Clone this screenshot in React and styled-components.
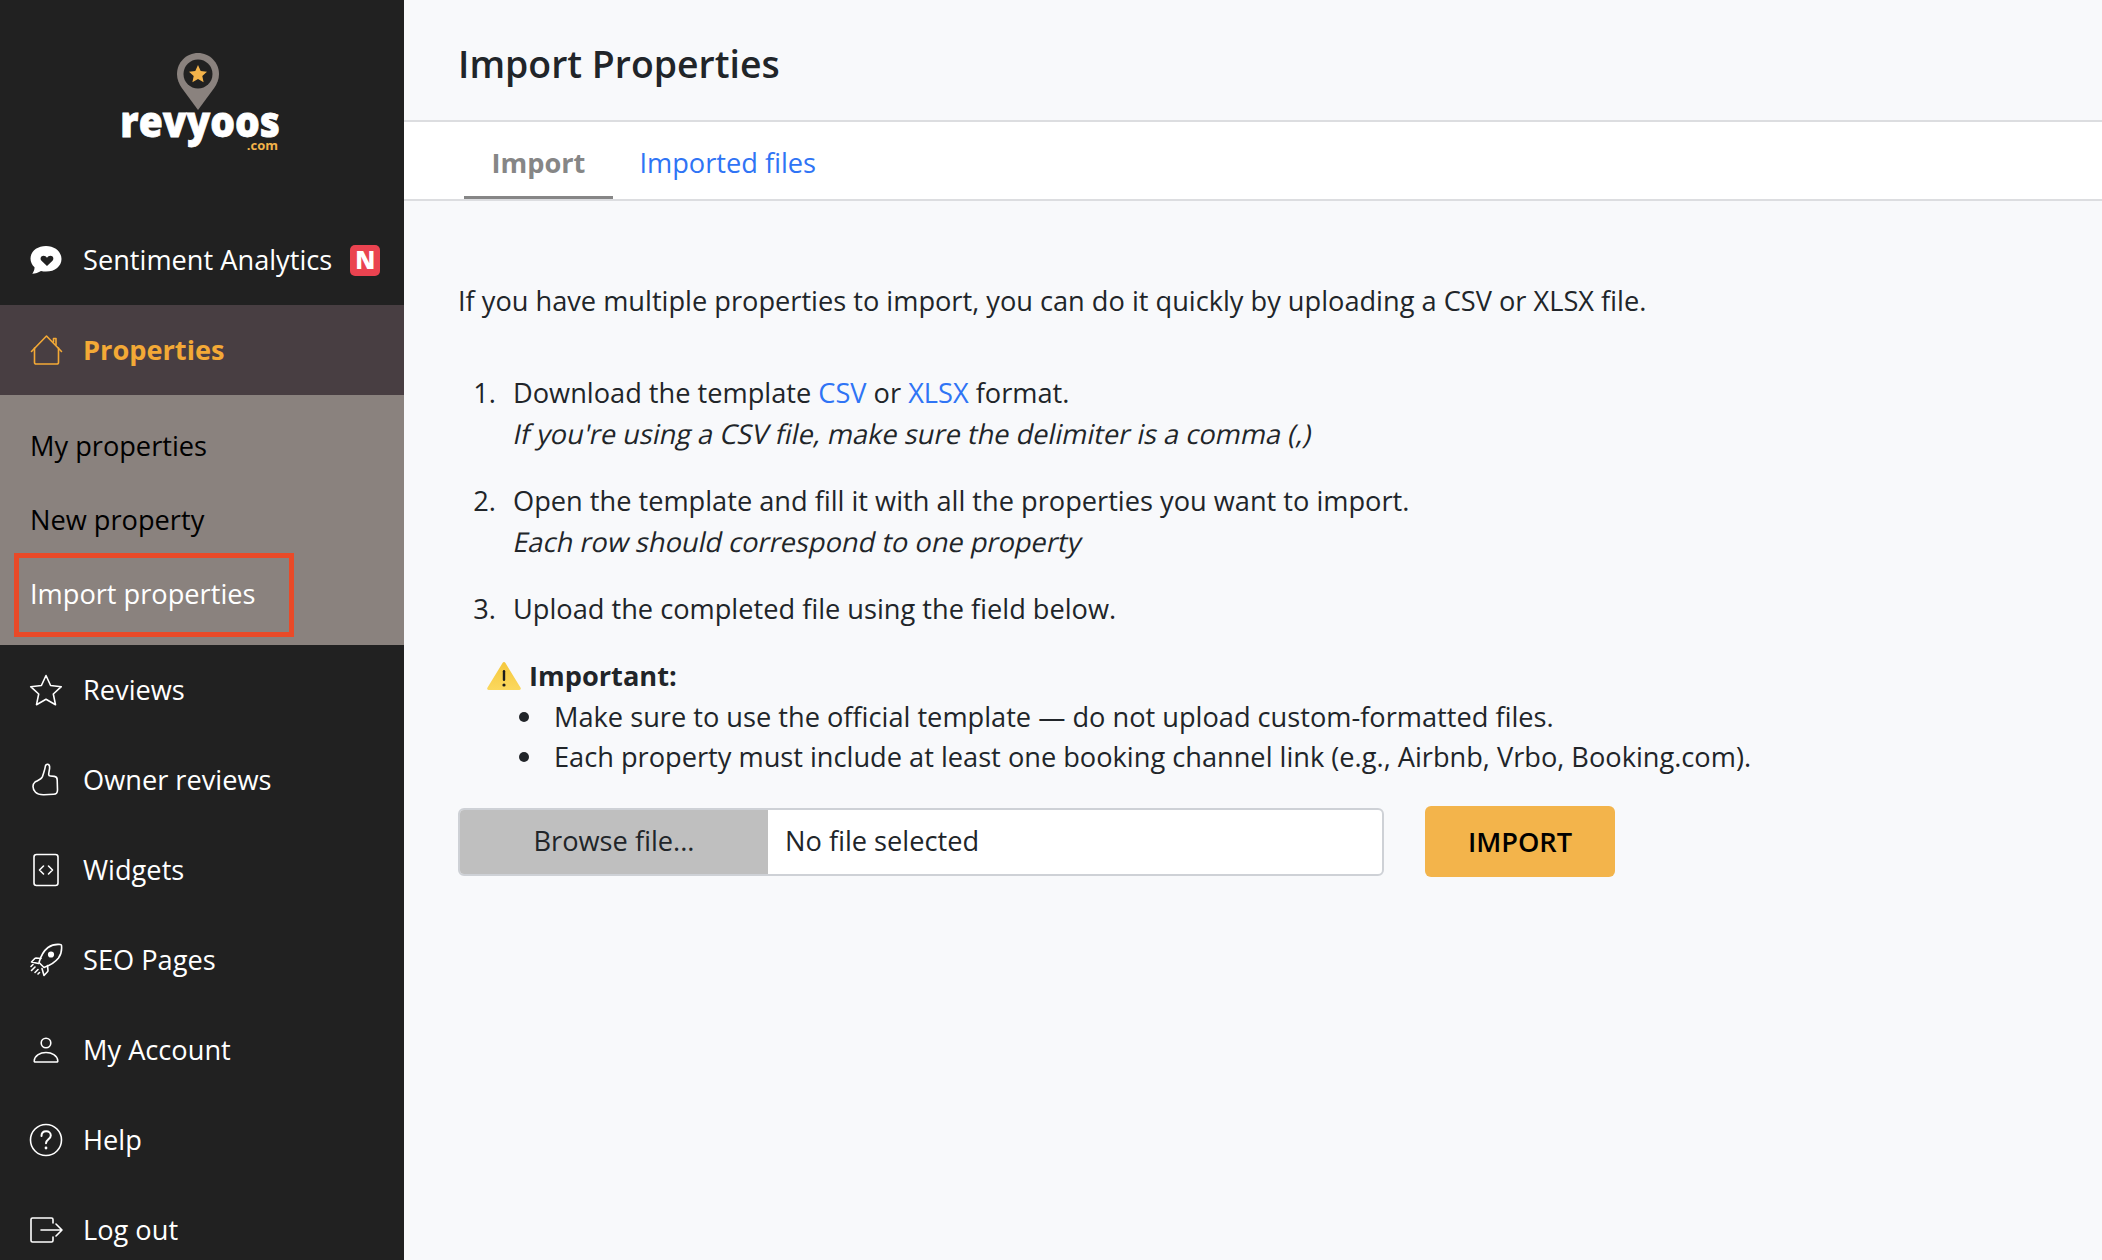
import React from 'react';
import styled, { createGlobalStyle } from 'styled-components';

const GlobalStyle = createGlobalStyle`
  html, body {
    margin: 0;
    padding: 0;
    background: #f8f9fb;
  }
  body {
    font-family: "Open Sans", "Noto Sans", sans-serif;
    font-size: 27.2px;
    line-height: 40.5px;
    color: #212529;
    overflow: hidden;
  }
  * {
    box-sizing: border-box;
  }
`;

const Page = styled.div`
  display: flex;
  width: 2102px;
  height: 1260px;
  overflow: hidden;
`;

const Sidebar = styled.nav`
  flex: 0 0 404px;
  height: 1260px;
  background: #212121;
  overflow: hidden;
`;

const LogoBlock = styled.div`
  height: 215px;
  display: flex;
  flex-direction: column;
  align-items: center;
  padding: 53px 8px 0 0;
`;

/* the logo lettering is narrower than any installed face */
const LogoWord = styled.div`
  margin: -7.5px 0 0 4px;
  font-size: 43px;
  font-weight: 800;
  line-height: 34px;
  color: #fff;
  -webkit-text-stroke: 0.8px #fff;
  transform: scaleX(0.905);
`;

const LogoCom = styled.div`
  align-self: flex-end;
  margin: 2.5px 118px 0 0;
  font-size: 13px;
  font-weight: 700;
  line-height: 10px;
  color: #f3b34a;
`;

const MenuRow = styled.a`
  display: flex;
  align-items: center;
  height: 90px;
  padding-left: 29px;
  color: ${(p) => (p.$active ? '#f3a936' : '#fff')};
  font-weight: ${(p) => (p.$active ? 700 : 400)};
  background: ${(p) => (p.$active ? '#483e42' : 'transparent')};
`;

const MenuIcon = styled.svg`
  flex: 0 0 34px;
  width: 34px;
  height: 34px;
  margin-right: 20px;
  fill: none;
  stroke: currentColor;
  stroke-width: 1.6;
  stroke-linecap: round;
  stroke-linejoin: round;
`;

const NewBadge = styled.span`
  display: flex;
  align-items: center;
  justify-content: center;
  width: 30px;
  height: 31px;
  margin-left: 18px;
  border-radius: 5px;
  background: #ea4350;
  color: #fff;
  font-size: 24px;
  font-weight: 800;
`;

const SubMenu = styled.div`
  height: 250px;
  padding-top: 14px;
  background: #8a827e;
`;

const SubItem = styled.a`
  position: relative;
  display: flex;
  align-items: center;
  height: 74px;
  padding-left: 30px;
  color: ${(p) => (p.$current ? '#fff' : '#000')};
`;

const Annotation = styled.span`
  position: absolute;
  left: 14px;
  top: -4px;
  width: 280px;
  height: 84px;
  border: 5px solid #e94a28;
`;

const Main = styled.main`
  flex: 1;
  min-width: 0;
`;

const TitleBar = styled.header`
  height: 122px;
  padding: 38px 0 0 54px;
  border-bottom: 2px solid #dcdde0;
`;

const Title = styled.h1`
  margin: 0;
  font-size: 37.4px;
  font-weight: 600;
  line-height: 52px;
  color: #212529;
`;

const Tabs = styled.div`
  display: flex;
  height: 79px;
  padding-left: 60px;
  background: #fff;
  border-bottom: 2px solid #dcdde0;
`;

const Tab = styled.a`
  height: 77px;
  padding: 21px 27.5px 0;
  font-weight: ${(p) => (p.$active ? 700 : 400)};
  color: ${(p) => (p.$active ? '#868686' : '#2f74f5')};
  border-bottom: ${(p) => (p.$active ? '3px solid #868686' : 'none')};
  &:not(:first-child) {
    padding-left: 26.5px;
  }
`;

const Content = styled.section`
  padding: 80px 54px 0;
`;

const Intro = styled.p`
  margin: 0 0 50px;
`;

const Steps = styled.ol`
  margin: 0;
  padding-left: 55px;
  list-style: none;
  counter-reset: step;
`;

const Step = styled.li`
  position: relative;
  margin-bottom: 26px;
  line-height: 41px;
  counter-increment: step;
  &::before {
    content: counter(step) ".";
    position: absolute;
    right: 100%;
    margin-right: 17px;
  }
  &:last-child {
    margin-bottom: 27.5px;
  }
`;

const Link = styled.a`
  color: #2f74f5;
`;

/* the reference slants the upright face, so it keeps the upright widths */
const Note = styled.span`
  display: block;
  margin-left: -1px;
  transform: skewX(-12deg);
  transform-origin: 0 75%;
`;

const ImportantBlock = styled.div`
  padding-left: 29px;
`;

const ImportantHead = styled.div`
  display: flex;
  align-items: center;
  font-weight: 700;
`;

const WarnIcon = styled.svg`
  width: 34px;
  height: 30px;
  margin-right: 8px;
`;

const Rules = styled.ul`
  margin: 0;
  padding-left: 67px;
  list-style: none;
`;

const Rule = styled.li`
  position: relative;
  &::before {
    content: "";
    position: absolute;
    left: -35px;
    top: 15px;
    width: 10px;
    height: 10px;
    border-radius: 50%;
    background: #212529;
  }
`;

const Actions = styled.div`
  display: flex;
  align-items: flex-start;
  gap: 41px;
  margin-top: 28px;
`;

const FileField = styled.div`
  display: flex;
  width: 926px;
  height: 68px;
  margin-top: 2px;
  border: 2px solid #ced1d6;
  border-radius: 6px;
  background: #fff;
  overflow: hidden;
`;

const BrowseButton = styled.span`
  flex: 0 0 308px;
  display: flex;
  align-items: center;
  justify-content: center;
  background: #bfbfbf;
`;

const FileName = styled.span`
  display: flex;
  align-items: center;
  padding-left: 17px;
`;

const ImportButton = styled.button`
  width: 190px;
  height: 71px;
  padding: 0;
  border: none;
  border-radius: 6px;
  background: #f3b44b;
  color: #000;
  font-family: inherit;
  font-size: 27.2px;
  font-weight: 600;
`;

const SentimentIcon = () => (
  <MenuIcon viewBox="0 0 34 34">
    <path
      d="M17 3C8 3 1.500 8.500 1.500 15.500c0 3.500 1.500 6.500 4 8.700.2 2.400-.8 4.600-2.200 6.600 3-.2 6.200-1.200 8.700-2.800 1.600.4 3.300.6 5 .6 9 0 15.500-5.500 15.500-12.600S26 3 17 3z"
      fill="#fff"
      stroke="none"
    />
    <path
      d="M18 23l-5.500-5.300c-1.800-2-.7-5 2-5 1.500 0 2.700.8 3.500 2 .8-1.200 2-2 3.500-2 2.700 0 3.800 3 2 5z"
      fill="#212121"
      stroke="none"
    />
  </MenuIcon>
);

const HouseIcon = () => (
  <MenuIcon viewBox="0 0 34 34">
    <path d="M2.500 18.500L17.500 3l15 15.500" />
    <path d="M5.500 15v14.500a1.500 1.500 0 0 0 1.500 1.500h21a1.500 1.500 0 0 0 1.500-1.500V15" />
    <path d="M24.500 9V5.500H27V12" />
  </MenuIcon>
);

const StarIcon = () => (
  <MenuIcon viewBox="0 0 34 34">
    <path d="M17 2.500l4.600 10 10.700 1.200-8 7.300 2.200 10.700L17 26.300l-9.500 5.400L9.700 21l-8-7.300 10.700-1.200z" />
  </MenuIcon>
);

const ThumbIcon = () => (
  <MenuIcon viewBox="0 0 34 34">
    <path d="M13.500 13.500c1-3.500 2.500-7 2.700-9.500.1-1.800 1.200-3 2.600-2.700 1.700.4 2 2.200 1.800 4-.2 2-.9 4.500-.9 6.300.1 1 .7 1.300 1.600 1.400l4 .4c2 .3 2.900 1.500 2.900 3.500l.3 10c0 2.500-1.500 4.300-4 4.400l-9.500.4c-3 .1-6.500-.5-8.500-2.500-1.500-1.500-2.500-3.500-2.500-5.700 0-1.800.7-3.400 2-4.500 2.700-1.500 6-2 7.500-5.500z" />
  </MenuIcon>
);

const WidgetIcon = () => (
  <MenuIcon viewBox="0 0 34 34">
    <rect x="5" y="1.500" width="24" height="31" rx="2.500" />
    <path d="M14.500 13l-4 4 4 4M19.500 13l4 4-4 4" />
  </MenuIcon>
);

const RocketIcon = () => (
  <MenuIcon viewBox="0 0 34 34">
    <path d="M10 19.500l5 5c5.500-2 11-5 14.500-9.500 2.500-3.500 3.500-8 3-12.500-.1-.6-.5-1-1-1C27 1 22.500 2 19 4.500 14.500 8 11.500 14 10 19.500z" />
    <path d="M12 15.500l-5-.5c-.5 0-.9.2-1.200.5L2.500 19l7 1.500" />
    <path d="M18.500 22.500l.5 5c0 .5-.2.9-.5 1.200L15 32.500l-2-7" />
    <circle cx="22" cy="11.500" r="2.300" fill="currentColor" />
    <path d="M6 24l-3.500 3.500M9 26.500l-3 3M4 21.500l-2 2M10.500 29.500l-1.500 1.500" />
  </MenuIcon>
);

const AccountIcon = () => (
  <MenuIcon viewBox="0 0 34 34">
    <circle cx="17" cy="10" r="4.800" />
    <path d="M6.500 29c-1 0-1.500-.5-1.300-1.500C6 22.500 11 19.500 17 19.500s11 3 11.800 8c.2 1-.3 1.500-1.300 1.500z" />
  </MenuIcon>
);

const HelpIcon = () => (
  <MenuIcon viewBox="0 0 34 34">
    <circle cx="17" cy="17" r="15.500" />
    <path d="M12.500 13c0-3 2-4.700 4.700-4.700 2.600 0 4.600 1.700 4.600 4.100 0 3.700-4.800 4-4.800 7.800" strokeWidth="2" />
    <circle cx="17" cy="25" r="1.400" fill="currentColor" stroke="none" />
  </MenuIcon>
);

const LogoutIcon = () => (
  <MenuIcon viewBox="0 0 34 34">
    <path d="M24 10V6.500A1.500 1.500 0 0 0 22.500 5h-19A1.500 1.500 0 0 0 2 6.500v21A1.500 1.500 0 0 0 3.500 29h19a1.500 1.500 0 0 0 1.500-1.500V24" />
    <path d="M12 17h21M27 11l6 6-6 6" />
  </MenuIcon>
);

const LogoPin = () => (
  <svg width="42" height="58" viewBox="0 0 42 58">
    <path
      d="M21 0C9.400 0 0 9.400 0 21c0 5.500 2 9.800 5 14.200L21 57l16-21.800c3-4.400 5-8.700 5-14.200C42 9.400 32.600 0 21 0z"
      fill="#8a827e"
    />
    <circle cx="21" cy="21" r="14.500" fill="#212121" />
    <path
      d="M21 12l2.700 6 6.300.7-4.700 4.300 1.300 6.300L21 26.100l-5.600 3.200 1.300-6.300-4.700-4.300 6.300-.7z"
      fill="#f3b34a"
    />
  </svg>
);

const menuTop = [{ label: 'Sentiment Analytics', Icon: SentimentIcon, badge: true }];

const menuBottom = [
  { label: 'Reviews', Icon: StarIcon },
  { label: 'Owner reviews', Icon: ThumbIcon },
  { label: 'Widgets', Icon: WidgetIcon },
  { label: 'SEO Pages', Icon: RocketIcon },
  { label: 'My Account', Icon: AccountIcon },
  { label: 'Help', Icon: HelpIcon },
  { label: 'Log out', Icon: LogoutIcon },
];

function App() {
  return (
    <Page>
      <GlobalStyle />
      <Sidebar>
        <LogoBlock>
          <LogoPin />
          <LogoWord>revyoos</LogoWord>
          <LogoCom>.com</LogoCom>
        </LogoBlock>
        {menuTop.map(({ label, Icon, badge }) => (
          <MenuRow key={label}>
            <Icon />
            {label}
            {badge && <NewBadge>N</NewBadge>}
          </MenuRow>
        ))}
        <MenuRow $active>
          <HouseIcon />
          Properties
        </MenuRow>
        <SubMenu>
          <SubItem>My properties</SubItem>
          <SubItem>New property</SubItem>
          <SubItem $current>
            Import properties
            <Annotation />
          </SubItem>
        </SubMenu>
        {menuBottom.map(({ label, Icon }) => (
          <MenuRow key={label}>
            <Icon />
            {label}
          </MenuRow>
        ))}
      </Sidebar>
      <Main>
        <TitleBar>
          <Title>Import Properties</Title>
        </TitleBar>
        <Tabs>
          <Tab $active>Import</Tab>
          <Tab>Imported files</Tab>
        </Tabs>
        <Content>
          <Intro>
            If you have multiple properties to import, you can do it quickly by uploading a CSV or XLSX file.
          </Intro>
          <Steps>
            <Step>
              Download the template <Link>CSV</Link> or <Link>XLSX</Link> format.
              <Note>If you're using a CSV file, make sure the delimiter is a comma (,)</Note>
            </Step>
            <Step>
              Open the template and fill it with all the properties you want to import.
              <Note>Each row should correspond to one property</Note>
            </Step>
            <Step>Upload the completed file using the field below.</Step>
          </Steps>
          <ImportantBlock>
            <ImportantHead>
              <WarnIcon viewBox="0 0 34 30">
                <defs>
                  <linearGradient id="warn" x1="0" y1="0" x2="0" y2="1">
                    <stop offset="0" stopColor="#f5c83c" />
                    <stop offset="1" stopColor="#fbd85e" />
                  </linearGradient>
                </defs>
                <path
                  d="M17 1c-.6 0-1 .3-1.300.8L.4 26.800c-.6 1 0 2.200 1.200 2.200h30.800c1.200 0 1.800-1.200 1.200-2.200L18.300 1.800C18 1.300 17.600 1 17 1z"
                  fill="url(#warn)"
                />
                <rect x="15.800" y="9" width="2.400" height="11" rx="1.200" fill="#1c1c1c" />
                <circle cx="17" cy="24" r="1.600" fill="#1c1c1c" />
              </WarnIcon>
              Important:
            </ImportantHead>
            <Rules>
              <Rule>Make sure to use the official template — do not upload custom-formatted files.</Rule>
              <Rule>Each property must include at least one booking channel link (e.g., Airbnb, Vrbo, Booking.com).</Rule>
            </Rules>
          </ImportantBlock>
          <Actions>
            <FileField>
              <BrowseButton>Browse file...</BrowseButton>
              <FileName>No file selected</FileName>
            </FileField>
            <ImportButton>IMPORT</ImportButton>
          </Actions>
        </Content>
      </Main>
    </Page>
  );
}

export default App;
